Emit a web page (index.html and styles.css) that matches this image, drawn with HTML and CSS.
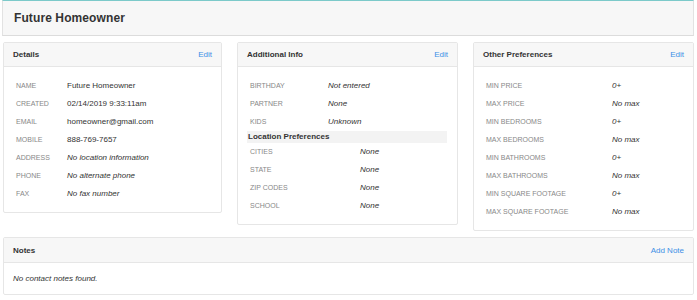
FILE: index.html
```html
<!DOCTYPE html>
<html>
<head>
<meta charset="utf-8">
<link rel="stylesheet" href="styles.css">
</head>
<body>
<div class="page">
  <header class="top">
    <h1>Future Homeowner</h1>
  </header>

  <div class="cards">
    <section class="card">
      <div class="card-head"><span class="title">Details</span><a class="link">Edit</a></div>
      <div class="card-body">
        <div class="kv kv-details">
          <span class="k">Name</span><span class="v">Future Homeowner</span>
          <span class="k">Created</span><span class="v">02/14/2019 9:33:11am</span>
          <span class="k">Email</span><span class="v">homeowner@gmail.com</span>
          <span class="k">Mobile</span><span class="v">888-769-7657</span>
          <span class="k">Address</span><span class="v i">No location information</span>
          <span class="k">Phone</span><span class="v i">No alternate phone</span>
          <span class="k">Fax</span><span class="v i">No fax number</span>
        </div>
      </div>
    </section>

    <section class="card">
      <div class="card-head"><span class="title">Additional Info</span><a class="link">Edit</a></div>
      <div class="card-body">
        <div class="kv kv-add">
          <span class="k">Birthday</span><span class="v i">Not entered</span>
          <span class="k">Partner</span><span class="v i">None</span>
          <span class="k">Kids</span><span class="v i">Unknown</span>
        </div>
        <div class="subhead">Location Preferences</div>
        <div class="kv kv-loc">
          <span class="k">Cities</span><span class="v i">None</span>
          <span class="k">State</span><span class="v i">None</span>
          <span class="k">Zip Codes</span><span class="v i">None</span>
          <span class="k">School</span><span class="v i">None</span>
        </div>
      </div>
    </section>

    <section class="card">
      <div class="card-head"><span class="title">Other Preferences</span><a class="link">Edit</a></div>
      <div class="card-body">
        <div class="kv kv-other">
          <span class="k">Min Price</span><span class="v i">0+</span>
          <span class="k">Max Price</span><span class="v i">No max</span>
          <span class="k">Min Bedrooms</span><span class="v i">0+</span>
          <span class="k">Max Bedrooms</span><span class="v i">No max</span>
          <span class="k">Min Bathrooms</span><span class="v i">0+</span>
          <span class="k">Max Bathrooms</span><span class="v i">No max</span>
          <span class="k">Min Square Footage</span><span class="v i">0+</span>
          <span class="k">Max Square Footage</span><span class="v i">No max</span>
        </div>
      </div>
    </section>
  </div>

  <section class="card notes">
    <div class="card-head"><span class="title">Notes</span><a class="link">Add Note</a></div>
    <div class="notes-body">No contact notes found.</div>
  </section>
</div>
</body>
</html>
```

FILE: styles.css
```css
* { box-sizing: border-box; }
html, body { margin: 0; padding: 0; background: #fff; }
body {
  font-family: "Liberation Sans", Arial, Helvetica, sans-serif;
  color: #333;
  width: 697px;
}
.page { padding: 0 3px 0 2px; }

.top {
  height: 36px;
  background: #f7f7f7;
  border: 1px solid #e2e2e2;
  border-top: 1px solid #7ccaca;
  border-bottom: 1px solid #dcdcdc;
  display: flex;
  align-items: center;
  padding: 0 11px;
}
.top h1 {
  margin: 0;
  font-size: 12px;
  font-weight: bold;
  color: #333;
  letter-spacing: 0.1px;
}

.cards {
  margin: 6px 0 6px 1px;
  display: grid;
  grid-template-columns: 219px 221px 221px;
  column-gap: 15px;
  align-items: start;
}

.card {
  background: #fff;
  border: 1px solid #e6e6e6;
  border-radius: 2px;
}
.card-head {
  height: 24px;
  background: #f7f7f7;
  border-bottom: 1px solid #e6e6e6;
  display: flex;
  align-items: center;
  justify-content: space-between;
  padding: 0 9px;
}
.title { font-size: 8px; font-weight: bold; color: #333; }
.link { font-size: 8px; color: #3d8fe6; cursor: pointer; }

.card-body { padding: 10px 10px 9px 9px; }

.kv { display: grid; }
.kv-details { grid-template-columns: 54px 1fr; }
.kv-add { grid-template-columns: 81px 1fr; }
.kv-loc { grid-template-columns: 113px 1fr; }
.kv-other { grid-template-columns: 129px 1fr; }

.k, .v { height: 18px; line-height: 18px; white-space: nowrap; }
.k {
  font-size: 7px;
  text-transform: uppercase;
  color: #888;
  padding-left: 3px;
}
.v { font-size: 8px; color: #333; }
.i { font-style: italic; }

.subhead {
  height: 12px;
  line-height: 12px;
  background: #f3f3f3;
  font-size: 8px;
  font-weight: bold;
  color: #333;
  padding-left: 1px;
}

.notes { margin-left: 1px; }
.notes .card-head { height: 25px; }
.notes-body {
  height: 31px;
  line-height: 31px;
  padding: 0 9px;
  font-size: 8px;
  font-style: italic;
  color: #333;
}
```
